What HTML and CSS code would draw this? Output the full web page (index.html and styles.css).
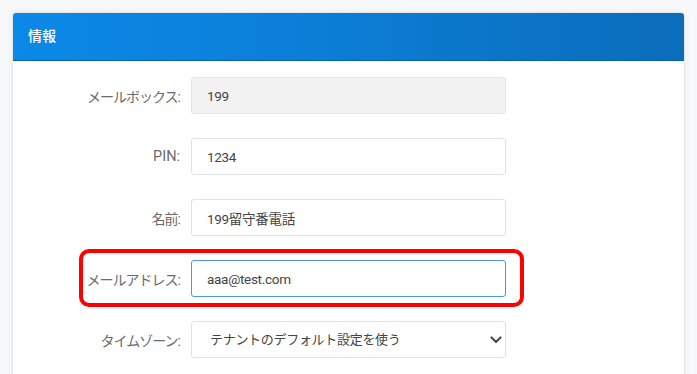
FILE: index.html
```html
<!DOCTYPE html>
<html lang="ja">
<head>
  <meta charset="UTF-8">
  <title>情報</title>
  <link rel="stylesheet" href="styles.css">
</head>
<body>
  <div class="card">
    <div class="card-header">情報</div>
    <div class="card-body">
      <div class="row">
        <label class="ja">メールボックス:</label>
        <input type="text" class="field readonly" value="199" readonly>
      </div>
      <div class="row">
        <label>PIN:</label>
        <input type="text" class="field" value="1234">
      </div>
      <div class="row">
        <label class="ja">名前:</label>
        <input type="text" class="field" value="199留守番電話">
      </div>
      <div class="row highlight">
        <label class="ja">メールアドレス:</label>
        <input type="text" class="field focused" value="aaa@test.com">
        <div class="mark"></div>
      </div>
      <div class="row">
        <label class="ja">タイムゾーン:</label>
        <div class="select-wrap">
          <select class="field select">
            <option>テナントのデフォルト設定を使う</option>
          </select>
          <svg class="chevron" width="12" height="8" viewBox="0 0 12 8">
            <path d="M1.5 1.5 L6 6 L10.5 1.5" fill="none" stroke="#4a4f55" stroke-width="2.2" stroke-linecap="round" stroke-linejoin="round"/>
          </svg>
        </div>
      </div>
    </div>
  </div>
</body>
</html>
```

FILE: styles.css
```css
body {
  margin: 0;
  background: #f7f8fa;
  font-family: Roboto, "Noto Sans CJK JP", sans-serif;
  font-size: 14px;
}
.card {
  margin: 12px 0 0 12px;
  width: 671px;
  height: 400px;
  background: #fff;
  border: 1px solid #e3e6ea;
  border-radius: 4px;
  box-shadow: 0 0 6px rgba(0, 0, 0, 0.05);
  overflow: hidden;
}
.card-header {
  height: 47px;
  line-height: 46px;
  padding-left: 15px;
  color: #fff;
  font-weight: 500;
  background: linear-gradient(90deg, #0b89e8 0%, #0c7ed6 45%, #0a6dbb 100%);
  border-bottom: 1px solid #0862a8;
}
.card-body {
  padding-top: 16px;
}
.row {
  display: flex;
  align-items: center;
  margin-bottom: 24px;
}
.row label {
  width: 167px;
  margin-right: 11px;
  text-align: right;
  color: #6b6b6b;
  font-size: 14.5px;
}
.row label.ja {
  font-size: 14px;
  letter-spacing: -1px;
}
.highlight {
  position: relative;
}
.mark {
  position: absolute;
  left: 66px;
  top: -11px;
  width: 437px;
  height: 50px;
  border: 4px solid #f00;
  border-radius: 10px;
}
.field {
  box-sizing: border-box;
  width: 315px;
  height: 37px;
  padding: 0 15px;
  border: 1px solid #e2e2e2;
  border-radius: 3px;
  background: #fff;
  color: #444;
  font-family: Roboto, "Noto Sans CJK JP", sans-serif;
  font-size: 13.5px;
  letter-spacing: -0.3px;
  outline: none;
}
.readonly {
  background: #f2f2f2;
  border-color: #e6e6e6;
}
.focused {
  border-color: #4a98db;
}
.select-wrap {
  position: relative;
}
.select {
  -webkit-appearance: none;
  appearance: none;
  padding-left: 18px;
  font-size: 13px;
}
.chevron {
  position: absolute;
  right: 4px;
  top: 15px;
}
```
